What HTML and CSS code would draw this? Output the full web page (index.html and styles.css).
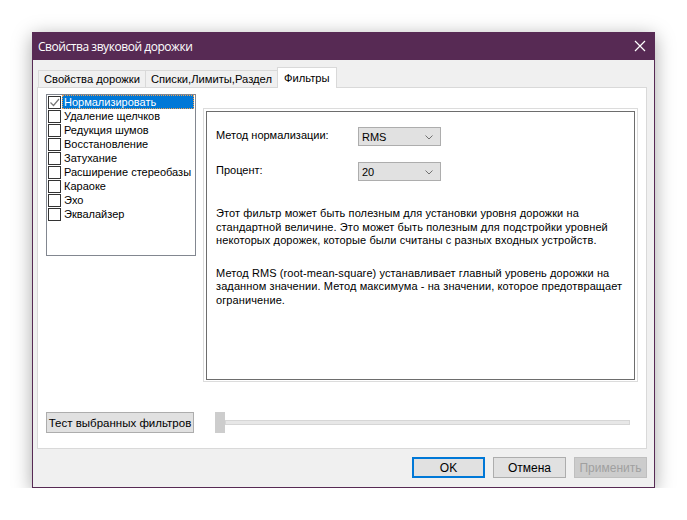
FILE: index.html
```html
<!DOCTYPE html>
<html lang="ru">
<head>
<meta charset="utf-8">
<title>Свойства звуковой дорожки</title>
<link rel="stylesheet" href="styles.css">
</head>
<body>
<div class="window">
  <div class="titlebar">
    <span class="title">Свойства звуковой дорожки</span>
    <svg class="close" width="12" height="12" viewBox="0 0 12 12"><path d="M1 1 L11 11 M11 1 L1 11" stroke="#fff" stroke-width="1.2" fill="none"/></svg>
  </div>
  <div class="body">
    <div class="tabs">
      <div class="tab">Свойства дорожки</div>
      <div class="tab">Списки,Лимиты,Раздел</div>
      <div class="tab active">Фильтры</div>
    </div>
    <div class="panel">
      <div class="top">
        <div class="checklist">
          <div class="item selected"><span class="cb checked"><svg width="11" height="11" viewBox="0 0 11 11"><path d="M1.5 5.5 L4.5 8.5 L10 2" stroke="#777" stroke-width="1.2" fill="none"/></svg></span><span class="label">Нормализировать</span></div>
          <div class="item"><span class="cb"></span><span class="label">Удаление щелчков</span></div>
          <div class="item"><span class="cb"></span><span class="label">Редукция шумов</span></div>
          <div class="item"><span class="cb"></span><span class="label">Восстановление</span></div>
          <div class="item"><span class="cb"></span><span class="label">Затухание</span></div>
          <div class="item"><span class="cb"></span><span class="label">Расширение стереобазы</span></div>
          <div class="item"><span class="cb"></span><span class="label">Караоке</span></div>
          <div class="item"><span class="cb"></span><span class="label">Эхо</span></div>
          <div class="item"><span class="cb"></span><span class="label">Эквалайзер</span></div>
        </div>
        <div class="group">
          <div class="group-inner">
            <div class="field">
              <span class="field-label">Метод нормализации:</span>
              <div class="select"><span>RMS</span><svg width="8" height="5" viewBox="0 0 8 5"><path d="M0.5 0.5 L4 4 L7.5 0.5" stroke="#707070" fill="none"/></svg></div>
            </div>
            <div class="field">
              <span class="field-label">Процент:</span>
              <div class="select"><span>20</span><svg width="8" height="5" viewBox="0 0 8 5"><path d="M0.5 0.5 L4 4 L7.5 0.5" stroke="#707070" fill="none"/></svg></div>
            </div>
            <p class="desc">Этот фильтр может быть полезным для установки уровня дорожки на стандартной величине. Это может быть полезным для подстройки уровней некоторых дорожек, которые были считаны с разных входных устройств.</p>
            <p class="desc">Метод RMS (root-mean-square) устанавливает главный уровень дорожки на заданном значении. Метод максимума - на значении, которое предотвращает ограничение.</p>
          </div>
        </div>
      </div>
      <div class="bottom">
        <button class="btn test">Тест выбранных фильтров</button>
        <div class="slider">
          <div class="thumb"></div>
          <div class="track"></div>
        </div>
      </div>
    </div>
    <div class="actions">
      <button class="btn ok">OK</button>
      <button class="btn">Отмена</button>
      <button class="btn disabled">Применить</button>
    </div>
  </div>
</div>
</body>
</html>
```

FILE: styles.css
```css
* { box-sizing: border-box; }
html, body { margin: 0; padding: 0; background: #ffffff; }
body { padding: 32px 0 0 32px; font-family: "Liberation Sans", Arial, sans-serif; }

.window {
  width: 623px;
  height: 456px;
  border: 1px solid #572a54;
  border-top: none;
  background: #f0f0f0;
  box-shadow: 0 4px 18px rgba(0,0,0,0.35);
  display: flex;
  flex-direction: column;
}

.titlebar {
  height: 28px;
  margin: 0 -1px;
  background: #572a54;
  display: flex;
  align-items: center;
  justify-content: space-between;
  padding: 0 9px 0 6px;
  color: #fff;
}
.title { font-family: "Open Sans", "Noto Sans", sans-serif; font-size: 12px; letter-spacing: -0.45px; }
.close { display: block; margin-top: -1px; }

.body { padding: 7px 8px 0 4px; display: flex; flex-direction: column; }

.tabs { display: flex; align-items: flex-end; padding-left: 1px; height: 20px; position: relative; z-index: 1; }
.tab {
  height: 17px;
  border: 1px solid #d9d9d9;
  border-bottom: none;
  background: #f0f0f0;
  font-family: "Liberation Sans", Arial, sans-serif;
  font-size: 11.2px;
  line-height: 16px;
  padding: 0 5px;
  color: #000;
  margin-right: -1px;
  white-space: nowrap;
}
.tab.active {
  background: #fff;
  margin-bottom: -1px;
  height: 21px;
  padding: 2px 6px 0;
  z-index: 2;
}

.panel {
  width: 610px;
  height: 362px;
  background: #fff;
  border: 1px solid #d9d9d9;
  padding: 6px 8px 0 8px;
  display: flex;
  flex-direction: column;
}

.top { display: flex; gap: 7px; align-items: flex-start; }

.checklist {
  width: 150px;
  height: 162px;
  border: 1px solid #828790;
  padding: 0 1px;
  font-size: 11px;
}
.item { height: 14px; display: flex; align-items: center; }
.cb {
  width: 13px; height: 13px;
  border: 1px solid #333;
  background: #fff;
  flex: none;
  display: flex; align-items: center; justify-content: center;
}
.label { margin-left: 1px; padding: 0 1px; line-height: 13px; height: 14px; flex: 1; white-space: nowrap; color: #000; border: 1px solid transparent; display: flex; align-items: center; }
.item.selected .label { background: #0078d7; color: #fff; border: 1px dotted #f0a050; }

.group {
  margin-top: 14px;
  width: 435px;
  height: 274px;
  border: 1px solid #dcdcdc;
  padding: 2px 2px 1px 2px;
}
.group-inner {
  height: 100%;
  border: 1px solid #6d6d6d;
  padding: 15px 9px 0 9px;
  font-size: 11px;
  color: #000;
}

.field { display: flex; align-items: center; height: 19px; margin-bottom: 16px; }
.field-label { width: 142px; margin-top: -4px; }
.select {
  width: 83px; height: 19px;
  background: #e1e1e1;
  border: 1px solid #adadad;
  display: flex; align-items: center; justify-content: space-between;
  padding: 1px 7px 0 3px;
  font-size: 11px;
}
.desc { margin: 0 0 19px; line-height: 13.5px; letter-spacing: 0.1px; }
.field + .field { margin-bottom: 26px; }

.bottom { display: flex; align-items: center; margin-top: 30px; gap: 21px; }
.btn {
  font-family: "Liberation Sans", Arial, sans-serif;
  font-size: 12px;
  color: #000;
  background: #e1e1e1;
  border: 1px solid #adadad;
  padding: 0;
  height: 21px;
}
.btn.test { width: 148px; font-size: 11.5px; }

.slider { display: flex; align-items: center; width: 415px; }
.thumb { width: 10px; height: 21px; background: #cdcdcd; flex: none; }
.track { height: 5px; flex: 1; background: #e7e7e7; border: 1px solid #d6d6d6; }

.actions { display: flex; justify-content: flex-end; gap: 8px; padding-top: 8px; margin-right: -1px; }
.actions .btn { width: 73px; height: 21px; font-size: 12px; }
.btn.ok { border: 2px solid #0078d7; }
.btn.disabled { background: #cccccc; border-color: #bfbfbf; color: #a0a0a0; }
```
